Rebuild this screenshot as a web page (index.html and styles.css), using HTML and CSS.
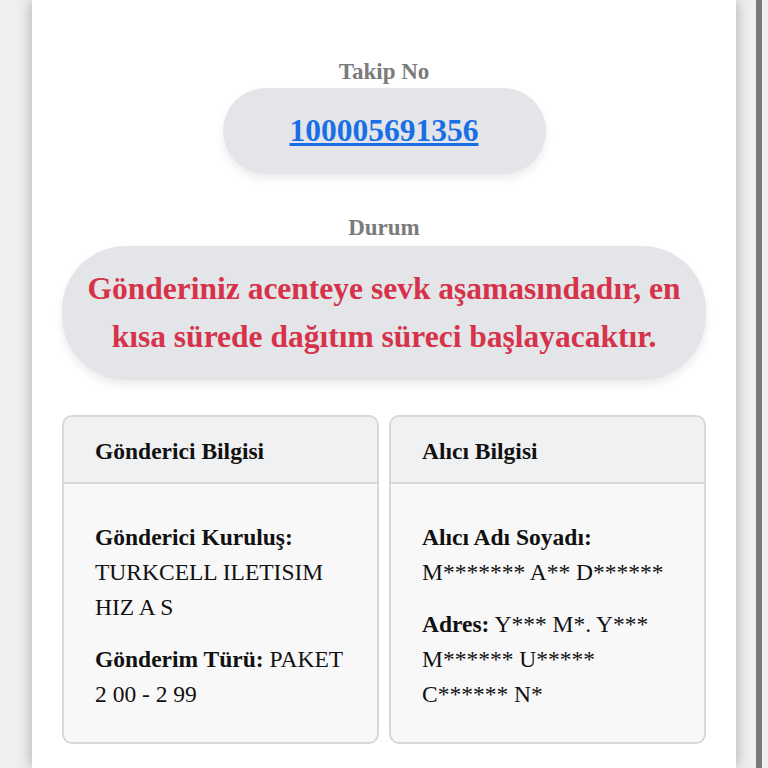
FILE: index.html
```html
<!DOCTYPE html>
<html>
  <head>
    <title>Gönderi Takip</title>
    <link rel="stylesheet" href="styles.css">
  </head>
  <body>
    <div class="page">
      <div class="track-section">
        <div class="section-label">Takip No</div>
        <div class="track-pill">
          <a href="#" class="track-link">100005691356</a>
        </div>
      </div>

      <div class="status-section">
        <div class="section-label">Durum</div>
        <div class="status-pill">
          Gönderiniz acenteye sevk aşamasındadır, en kısa sürede dağıtım süreci başlayacaktır.
        </div>
      </div>

      <div class="info-grid">
        <div class="info-card">
          <div class="info-header">Gönderici Bilgisi</div>
          <div class="info-body">
            <p><strong>Gönderici Kuruluş:</strong> TURKCELL ILETISIM HIZ A S</p>
            <p><strong>Gönderim Türü:</strong> PAKET 2 00 - 2 99</p>
          </div>
        </div>
        <div class="info-card">
          <div class="info-header">Alıcı Bilgisi</div>
          <div class="info-body">
            <p><strong>Alıcı Adı Soyadı:</strong> M******* A** D******</p>
            <p><strong>Adres:</strong> Y*** M*. Y*** M****** U***** C****** N*</p>
          </div>
        </div>
      </div>
    </div>
    <div class="scrollbar"></div>
  </body>
</html>
```

FILE: styles.css
```css
body {
  margin: 0;
  background-color: #efefef;
  font-family: "Liberation Serif", "Times New Roman", serif;
  color: #111;
}
.page {
  margin: 0 32px;
  min-height: 768px;
  box-sizing: border-box;
  background: white;
  padding: 59px 30px 0;
  box-shadow: 0 0 14px rgba(0, 0, 0, 0.3);
}
.scrollbar {
  position: fixed;
  top: 0;
  right: 6px;
  width: 6px;
  height: 100vh;
  background: #7a7a7a;
}
.track-section,
.status-section {
  text-align: center;
}
.section-label {
  font-size: 23px;
  font-weight: bold;
  color: #7b7b7b;
  margin-bottom: 3px;
}
.track-pill {
  display: inline-flex;
  align-items: center;
  height: 86px;
  padding: 0 67px;
  background: #e4e5e8;
  border-radius: 43px;
  box-shadow: 0 5px 8px rgba(0, 0, 0, 0.08);
}
.track-link {
  font-size: 31.5px;
  font-weight: bold;
  color: #1a6fe6;
}
.status-section {
  margin-top: 41px;
}
.status-section .section-label {
  margin-bottom: 5px;
}
.status-pill {
  padding: 19px 18px;
  background: #e4e5e8;
  border-radius: 64px;
  box-shadow: 0 5px 8px rgba(0, 0, 0, 0.08);
  font-size: 31.5px;
  font-weight: bold;
  line-height: 48px;
  color: #d6334a;
}
.info-grid {
  display: grid;
  grid-template-columns: 1fr 1fr;
  gap: 10px;
  margin-top: 35px;
}
.info-card {
  border: 2px solid #d8d8d8;
  border-radius: 10px;
  background: #f8f8f9;
  overflow: hidden;
}
.info-header {
  padding: 21px 31px 17px;
  background: #f0f1f3;
  border-bottom: 2px solid #d8d8d8;
  font-size: 23.5px;
  font-weight: bold;
}
.info-body {
  padding: 36px 31px 30px;
  font-size: 23.5px;
  line-height: 35px;
}
.info-body p {
  margin: 0 0 17px;
}
.info-body p:last-child {
  margin-bottom: 0;
}
```
